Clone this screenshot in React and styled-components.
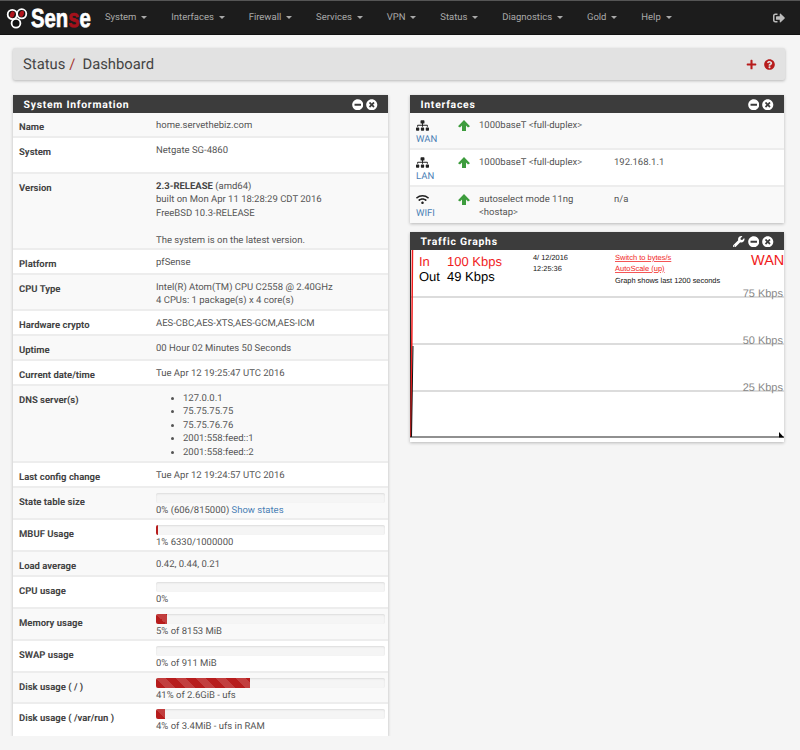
import React from "react";
import styled, { createGlobalStyle } from "styled-components";
import {
  FaMinusCircle,
  FaPlus,
  FaQuestionCircle,
  FaSignOutAlt,
  FaSitemap,
  FaTimesCircle,
  FaWifi,
  FaWrench,
} from "react-icons/fa";

const GlobalStyle = createGlobalStyle`
  html, body {
    margin: 0;
    padding: 0;
    background: #f5f5f5;
    font-family: Roboto, "Liberation Sans", sans-serif;
    font-size: 9.5px;
    line-height: 13.4px;
    color: #555;
    text-rendering: geometricPrecision;
  }
  * { box-sizing: border-box; }
`;

const Navbar = styled.nav`
  height: 35px;
  background: #1c1c1c;
  border-top: 1px solid #555;
  border-bottom: 1px solid #111;
  display: flex;
  align-items: center;
  padding: 0 15px 0 6px;
`;

const Brand = styled.div`
  flex: none;
  width: 87px;
  display: flex;
  align-items: center;
  gap: 1px;
  svg { flex: none; }
`;

const BrandText = styled.span`
  flex: none;
  width: 60px;
  font-family: "Liberation Sans", sans-serif;
  font-weight: 700;
  font-size: 26px;
  line-height: 28px;
  color: #fff;
  transform: scaleX(0.78);
  transform-origin: left center;
  -webkit-text-stroke: 0.7px #fff;
  white-space: nowrap;
  em {
    font-style: normal;
    color: #a5111b;
    -webkit-text-stroke: 0.7px #a5111b;
  }
`;

const NavMenu = styled.div`
  display: flex;
  flex: 1;
`;

const NavItem = styled.a`
  color: #a9a9a9;
  padding: 0 11.9px;
  display: flex;
  align-items: center;
  gap: 5px;
  white-space: nowrap;
  &::after {
    content: "";
    border-top: 3px solid #a9a9a9;
    border-left: 3px solid transparent;
    border-right: 3px solid transparent;
  }
`;

const Logout = styled.span`
  color: #bbb;
  font-size: 12px;
  display: flex;
`;

const Page = styled.main`
  padding: 13px 15px 0 13px;
`;

const Breadcrumb = styled.header`
  height: 32px;
  background: #e2e2e2;
  border-radius: 2px;
  box-shadow: 0 1px 3px rgba(0, 0, 0, 0.25);
  display: flex;
  align-items: center;
  justify-content: space-between;
  padding: 1px 10px 0;
  font-size: 14.8px;
  color: #444;
`;

const Crumbs = styled.h1`
  margin: 0;
  font: inherit;
  display: flex;
  i {
    font-style: normal;
    color: #a5332f;
    margin: 0 7px 0 4px;
  }
`;

const Actions = styled.div`
  display: flex;
  align-items: center;
  gap: 7px;
  color: #b71c1c;
  font-size: 11px;
`;

const Columns = styled.div`
  display: grid;
  grid-template-columns: 375px 374px;
  gap: 22px;
  margin-top: 15px;
  align-items: start;
`;

const Stack = styled.div`
  display: flex;
  flex-direction: column;
  gap: 9px;
`;

const Panel = styled.section`
  background: #fff;
  box-shadow: 0 1px 3px rgba(0, 0, 0, 0.25);
`;

const PanelHead = styled.div`
  height: 18px;
  background: #3c3c3c;
  color: #fff;
  display: flex;
  align-items: center;
  justify-content: space-between;
  padding: 1px 10.5px 0;
  font-weight: 700;
  font-size: 10.4px;
  letter-spacing: 0.75px;
`;

const PanelTools = styled.span`
  display: flex;
  align-items: center;
  gap: 3px;
  font-size: 11.5px;
  color: #fff;
`;

const Row = styled.div`
  display: grid;
  grid-template-columns: 137px 1fr;
  height: ${(p) => p.$h}px;
  background: ${(p) => (p.$alt ? "#f9f9f9" : "#fff")};
  border-bottom: 2px solid #ededed;
  padding: 5px 3px 0 6px;
  &:last-child { border-bottom: 0; }
`;

const Label = styled.div`
  font-weight: 700;
  color: #444;
  padding-top: 2.5px;
`;

const Value = styled.div`
  color: #555;
  padding-top: ${(p) => (p.$bar ? 0 : 1)}px;
  b { color: #444; }
  a { color: #4a7fb5; }
`;

const DnsList = styled.ul`
  margin: 0;
  padding: 0 0 0 27px;
`;

const Progress = styled.div`
  height: 10px;
  margin-bottom: 0.5px;
  background: #f5f5f5;
  border-radius: 2px;
  box-shadow: inset 0 1px 2px rgba(0, 0, 0, 0.1);
  overflow: hidden;
`;

const ProgressFill = styled.div`
  height: 100%;
  background-color: #b71c1c;
  background-image: linear-gradient(
    45deg,
    rgba(255, 255, 255, 0.15) 25%,
    transparent 25%,
    transparent 50%,
    rgba(255, 255, 255, 0.15) 50%,
    rgba(255, 255, 255, 0.15) 75%,
    transparent 75%
  );
  background-size: 20px 20px;
`;

const IfaceRow = styled.div`
  display: grid;
  grid-template-columns: 42px 21px 135px 1fr;
  height: ${(p) => p.$h}px;
  padding: 5.5px 6px 0 6px;
  background: ${(p) => (p.$alt ? "#f9f9f9" : "#fff")};
  border-bottom: 2px solid #ededed;
  &:last-child { border-bottom: 0; }
`;

const IfaceName = styled.div`
  color: #4a7fb5;
  display: flex;
  flex-direction: column;
  gap: 1px;
  svg {
    color: #222;
    font-size: 13px;
  }
`;

const UpArrow = styled.div`
  padding-top: 1px;
  svg { display: block; }
`;

const GraphPanel = styled(Panel)`
  svg { display: block; }
`;

const stats = [
  { label: "Name", h: 25, alt: true, lines: ["home.servethebiz.com"] },
  { label: "System", h: 36, lines: ["Netgate SG-4860"] },
  {
    label: "Version",
    h: 76,
    alt: true,
    lines: [
      <>
        <b>2.3-RELEASE</b> (amd64)
      </>,
      "built on Mon Apr 11 18:28:29 CDT 2016",
      "FreeBSD 10.3-RELEASE",
      <br key="gap" />,
      "The system is on the latest version.",
    ],
  },
  { label: "Platform", h: 25, lines: ["pfSense"] },
  {
    label: "CPU Type",
    h: 36,
    alt: true,
    lines: ["Intel(R) Atom(TM) CPU C2558 @ 2.40GHz", "4 CPUs: 1 package(s) x 4 core(s)"],
  },
  { label: "Hardware crypto", h: 25, lines: ["AES-CBC,AES-XTS,AES-GCM,AES-ICM"] },
  { label: "Uptime", h: 25, alt: true, lines: ["00 Hour 02 Minutes 50 Seconds"] },
  { label: "Current date/time", h: 25, lines: ["Tue Apr 12 19:25:47 UTC 2016"] },
  {
    label: "DNS server(s)",
    h: 77,
    alt: true,
    dns: ["127.0.0.1", "75.75.75.75", "75.75.76.76", "2001:558:feed::1", "2001:558:feed::2"],
  },
  { label: "Last config change", h: 25, lines: ["Tue Apr 12 19:24:57 UTC 2016"] },
  {
    label: "State table size",
    h: 32,
    alt: true,
    bar: 0,
    lines: [
      <>
        0% (606/815000) <a>Show states</a>
      </>,
    ],
  },
  { label: "MBUF Usage", h: 32, bar: 1, lines: ["1% 6330/1000000"] },
  { label: "Load average", h: 25, alt: true, lines: ["0.42, 0.44, 0.21"] },
  { label: "CPU usage", h: 32, bar: 0, lines: ["0%"] },
  { label: "Memory usage", h: 32, alt: true, bar: 5, lines: ["5% of 8153 MiB"] },
  { label: "SWAP usage", h: 32, bar: 0, lines: ["0% of 911 MiB"] },
  { label: "Disk usage ( / )", h: 31, alt: true, bar: 41, lines: ["41% of 2.6GiB - ufs"] },
  { label: "Disk usage ( /var/run )", h: 32, bar: 4, lines: ["4% of 3.4MiB - ufs in RAM"] },
];

const menu = [
  "System",
  "Interfaces",
  "Firewall",
  "Services",
  "VPN",
  "Status",
  "Diagnostics",
  "Gold",
  "Help",
];

const Logo = () => (
  <svg width="24" height="24" viewBox="0 0 24 24">
    <g fill="#111" stroke="#fff" strokeWidth="1.8">
      <circle cx="6.3" cy="8.5" r="4.6" />
      <circle cx="15.7" cy="7.8" r="4.6" />
      <circle cx="10" cy="17.2" r="4.4" />
    </g>
    <ellipse cx="6.3" cy="8.5" rx="2.2" ry="3.2" fill="#b0141c" transform="rotate(20 6.3 8.5)" />
    <ellipse cx="15.7" cy="7.8" rx="2.2" ry="3.2" fill="#b0141c" transform="rotate(20 15.7 7.8)" />
  </svg>
);

const ArrowUpIcon = () => (
  <svg width="12" height="11" viewBox="0 0 12 11">
    <path d="M6 0 L12 6.2 L10 7.6 L8 5.6 V11 H4 V5.6 L2 7.6 L0 6.2 Z" fill="#3d9c3d" />
  </svg>
);

const TrafficGraph = () => (
  <svg width="374" height="192" viewBox="0 0 374 192">
    <rect width="374" height="192" fill="#fff" />
    <g stroke="#b9b9b9" strokeWidth="1.2">
      <line x1="0" y1="47" x2="374" y2="47" />
      <line x1="0" y1="94" x2="374" y2="94" />
      <line x1="0" y1="141" x2="374" y2="141" />
    </g>
    <line x1="0.5" y1="0" x2="0.5" y2="187" stroke="#222" />
    <path d="M2.5 0 L2 70 L1 187" stroke="#f01c1c" strokeWidth="1.5" fill="none" />
    <path d="M3 96 L1.5 187" stroke="#111" strokeWidth="1" fill="none" />
    <line x1="0" y1="187" x2="374" y2="187" stroke="#222" strokeWidth="1.2" />
    <path d="M369 182 L374 187.5 L369 187.5 Z" fill="#000" />
    <g fontFamily="'Liberation Sans', sans-serif">
      <g fontSize="13">
        <text x="9" y="16" fill="#f01c1c">In</text>
        <text x="37" y="16" fill="#f01c1c">100 Kbps</text>
        <text x="9" y="31">Out</text>
        <text x="37" y="31">49 Kbps</text>
      </g>
      <g fontSize="7.4" fill="#111">
        <text x="123" y="10">4/ 12/2016</text>
        <text x="123" y="21">12:25:36</text>
        <text x="205" y="33">Graph shows last 1200 seconds</text>
      </g>
      <g fontSize="7.5" fill="#f01c1c" textDecoration="underline">
        <text x="205" y="10">Switch to bytes/s</text>
        <text x="205" y="21">AutoScale (up)</text>
      </g>
      <text x="341" y="15" fontSize="14.5" fill="#f01c1c">WAN</text>
      <g fontSize="11" fill="#888" textAnchor="end">
        <text x="373" y="47">75 Kbps</text>
        <text x="373" y="94">50 Kbps</text>
        <text x="373" y="141">25 Kbps</text>
      </g>
    </g>
  </svg>
);

const PanelButtons = ({ wrench }) => (
  <PanelTools>
    {wrench && <FaWrench />}
    <FaMinusCircle />
    <FaTimesCircle />
  </PanelTools>
);

export default function App() {
  return (
    <>
      <GlobalStyle />
      <Navbar>
        <Brand>
          <Logo />
          <BrandText>
            Sen<em>s</em>e
          </BrandText>
        </Brand>
        <NavMenu>
          {menu.map((m) => (
            <NavItem key={m}>{m}</NavItem>
          ))}
        </NavMenu>
        <Logout>
          <FaSignOutAlt />
        </Logout>
      </Navbar>
      <Page>
        <Breadcrumb>
          <Crumbs>
            Status<i>/</i>Dashboard
          </Crumbs>
          <Actions>
            <FaPlus />
            <FaQuestionCircle />
          </Actions>
        </Breadcrumb>
        <Columns>
          <Panel>
            <PanelHead>
              System Information
              <PanelButtons />
            </PanelHead>
            {stats.map((s) => (
              <Row key={s.label} $h={s.h} $alt={s.alt}>
                <Label>{s.label}</Label>
                <Value $bar={s.bar !== undefined}>
                  {s.bar !== undefined && (
                    <Progress>
                      <ProgressFill style={{ width: `${s.bar}%` }} />
                    </Progress>
                  )}
                  {s.lines && s.lines.map((l, i) => <div key={i}>{l}</div>)}
                  {s.dns && (
                    <DnsList>
                      {s.dns.map((d) => (
                        <li key={d}>{d}</li>
                      ))}
                    </DnsList>
                  )}
                </Value>
              </Row>
            ))}
          </Panel>
          <Stack>
            <Panel>
              <PanelHead>
                Interfaces
                <PanelButtons />
              </PanelHead>
              <IfaceRow $h={37} $alt>
                <IfaceName>
                  <FaSitemap />
                  WAN
                </IfaceName>
                <UpArrow>
                  <ArrowUpIcon />
                </UpArrow>
                <div>1000baseT &lt;full-duplex&gt;</div>
                <div />
              </IfaceRow>
              <IfaceRow $h={37}>
                <IfaceName>
                  <FaSitemap />
                  LAN
                </IfaceName>
                <UpArrow>
                  <ArrowUpIcon />
                </UpArrow>
                <div>1000baseT &lt;full-duplex&gt;</div>
                <div>192.168.1.1</div>
              </IfaceRow>
              <IfaceRow $h={36} $alt>
                <IfaceName>
                  <FaWifi />
                  WIFI
                </IfaceName>
                <UpArrow>
                  <ArrowUpIcon />
                </UpArrow>
                <div>
                  autoselect mode 11ng
                  <br />
                  &lt;hostap&gt;
                </div>
                <div>n/a</div>
              </IfaceRow>
            </Panel>
            <GraphPanel>
              <PanelHead>
                Traffic Graphs
                <PanelButtons wrench />
              </PanelHead>
              <TrafficGraph />
            </GraphPanel>
          </Stack>
        </Columns>
      </Page>
    </>
  );
}
